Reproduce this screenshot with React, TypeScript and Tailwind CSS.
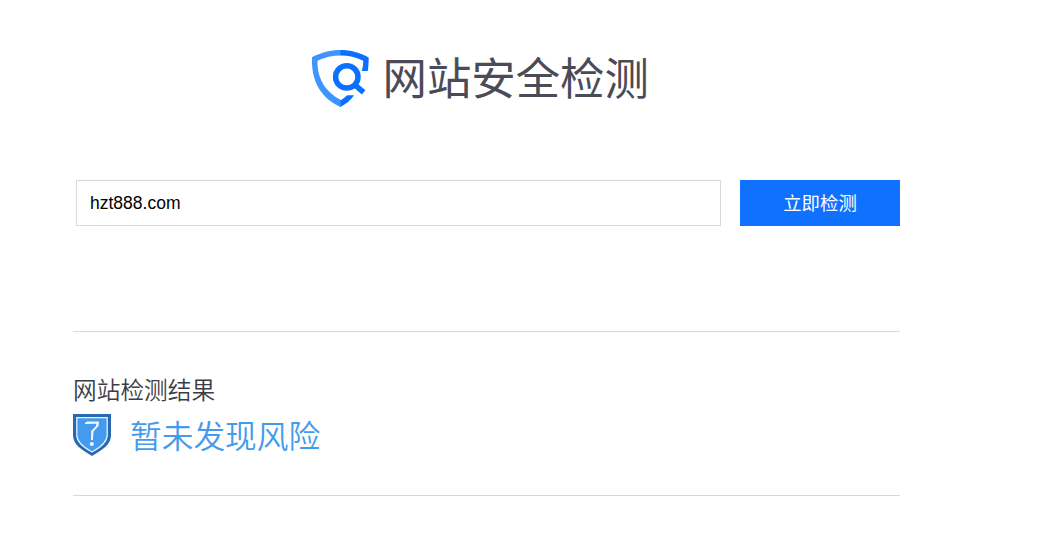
import { useState } from "react";

const LogoIcon = () => (
  <svg width="58" height="58" viewBox="0 0 58 58" fill="none" className="shrink-0">
    {/* shield */}
    <path
      d="M29 0C18.500 0 8.500 2.600 0 7.200V14C1 33.500 10 48.500 28.500 57H29V50C15 43 6.500 31 5.500 15V10.800C12.500 7.200 20.500 5.400 29 5.400Z"
      fill="#3f94ff"
    />
    <path
      d="M28.500 0C38.500 0 48 2.600 56.700 7.400C56.700 12.500 56.400 17 55.800 21H49.700C50.700 17.500 51.200 14.500 51.200 10.800C44.500 7.200 36.500 5.400 28.500 5.400Z"
      fill="#0c70ff"
    />
    <path d="M28.500 50.200C31 49 33 47.300 35 45.300H42.200C38.600 50.500 34 54 28.500 57Z" fill="#0c70ff" />
    {/* magnifier */}
    <circle cx="34.800" cy="26.900" r="11.200" stroke="#0c70ff" strokeWidth="5.500" />
    <path d="M42 34.200L51.600 42.400" stroke="#0c70ff" strokeWidth="5.500" />
  </svg>
);

const ResultIcon = () => (
  <svg width="38" height="42" viewBox="0 0 38 42" fill="none" className="shrink-0">
    <path d="M0 0H38V21C38 31 29 36 19 42C9 36 0 31 0 21Z" fill="#2768b1" />
    <path
      d="M3.800 3.600H34.200V21C34.200 28.500 27.500 33.500 19 38C10.500 33.500 3.800 28.500 3.800 21Z"
      fill="#449bee"
      stroke="#e4f1ff"
      strokeWidth="1.300"
    />
    <path d="M12 9L14 7.500H26L25.500 12L20.500 17.500L19.900 26H18L18.200 17L23 12L23.300 9.800L12 10Z" fill="#eef7ff" />
    <circle cx="18.800" cy="30" r="2.100" fill="#eef7ff" />
  </svg>
);

const App = () => {
  const [url, setUrl] = useState("hzt888.com");

  return (
    <div className="h-[549px] overflow-hidden bg-white font-['Noto_Sans_CJK_SC',sans-serif]">
      <main className="ml-[73px] w-[827px]">
        <header className="flex h-[180px] items-start gap-[12.5px] pt-[50px] pl-[239px]">
          <LogoIcon />
          <h1 className="h-[58px] text-[44.4px] leading-[51px] font-normal whitespace-nowrap text-[#4b4b57]">
            网站安全检测
          </h1>
        </header>

        <form className="flex h-[46px] pl-[3px]" onSubmit={(e) => e.preventDefault()}>
          <input
            type="text"
            value={url}
            onChange={(e) => setUrl(e.target.value)}
            className="h-[46px] w-[645px] border border-[#d9d9dc] px-[13px] font-['Liberation_Sans',sans-serif] text-[17.5px] text-black outline-none"
          />
          <button
            type="submit"
            className="ml-[19px] h-[46px] w-40 bg-[#1071ff] pb-px text-[18.4px] leading-[45px] font-normal text-white"
          >
            立即检测
          </button>
        </form>

        <section className="mt-[105px] h-[165px] border-y border-[#d9d9d9] pt-[41px]">
          <h2 className="h-[41px] text-[23.7px] leading-[33px] font-[350] text-[#3d3d46]">
            网站检测结果
          </h2>
          <div className="flex gap-[19px]">
            <ResultIcon />
            <p className="text-[31.7px] leading-[41px] font-[350] text-[#449bee]">
              暂未发现风险
            </p>
          </div>
        </section>
      </main>
    </div>
  );
};

export default App;
